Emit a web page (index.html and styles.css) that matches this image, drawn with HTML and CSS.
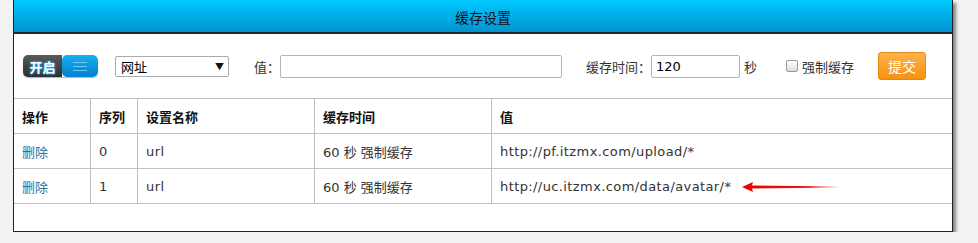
FILE: index.html
```html
<!DOCTYPE html>
<html lang="zh-CN">
<head>
    <meta charset="UTF-8">
    <title>缓存设置</title>
    <link rel="stylesheet" href="styles.css">
</head>
<body>

<div class="page">
    <div class="panel">
        <div class="panel-head">缓存设置</div>

        <form class="toolbar">
            <div class="switch">
                <span class="switch-on">开启</span>
                <span class="switch-knob"><i></i><i></i><i></i></span>
            </div>

            <div class="select">
                <span>网址</span>
                <span class="caret">▼</span>
            </div>

            <label class="lbl lbl-value">值：</label>
            <input type="text" class="txt txt-value">

            <label class="lbl lbl-time">缓存时间：</label>
            <input type="text" class="txt txt-time" value="120">
            <span class="unit">秒</span>

            <label class="chk"><span class="box"></span>强制缓存</label>

            <button type="button" class="btn-submit">提交</button>
        </form>

        <table class="list">
            <tr>
                <th class="c-op">操作</th>
                <th class="c-idx">序列</th>
                <th class="c-name">设置名称</th>
                <th class="c-time">缓存时间</th>
                <th>值</th>
            </tr>
            <tr>
                <td><a href="#">删除</a></td>
                <td>0</td>
                <td class="latin">url</td>
                <td>60 秒 强制缓存</td>
                <td class="latin">http://pf.itzmx.com/upload/*</td>
            </tr>
            <tr>
                <td><a href="#">删除</a></td>
                <td>1</td>
                <td class="latin">url</td>
                <td>60 秒 强制缓存</td>
                <td class="latin">http://uc.itzmx.com/data/avatar/*
                    <svg class="arrow" width="96" height="12" viewBox="0 0 96 12">
                        <defs>
                            <linearGradient id="fade" x1="0" x2="1" y1="0" y2="0">
                                <stop offset="0" stop-color="#ee0000"/>
                                <stop offset="0.7" stop-color="#f01010"/>
                                <stop offset="1" stop-color="#f01010" stop-opacity="0.15"/>
                            </linearGradient>
                        </defs>
                        <polygon points="0,6 11,1 10,4.5 96,5.6 96,6.4 10,7.6 11,11" fill="url(#fade)"/>
                    </svg>
                </td>
            </tr>
        </table>
    </div>
</div>

</body>
</html>
```

FILE: styles.css
```css
body {
    margin: 0;
    background-color: #f2f2f2;
    font-family: "DejaVu Sans", "Noto Sans CJK SC", sans-serif;
    font-size: 13px;
    color: #333;
}
.page {
    padding: 0 25px 0 13px;
}
.panel {
    background-color: #fff;
    border: 1px solid #222;
    border-top: none;
    box-shadow: 3px 3px 3px rgba(0, 0, 0, 0.45);
    height: 231px;
}
.panel-head {
    height: 32px;
    line-height: 34px;
    text-align: center;
    font-family: "Noto Sans CJK SC", sans-serif;
    font-size: 14px;
    color: #111;
    background: linear-gradient(#00c8ff, #0094cf);
    border-bottom: 2px solid #1e2a30;
}

/* toolbar */
.toolbar {
    display: flex;
    align-items: center;
    height: 64px;
    padding-left: 9px;
    margin: 0;
}
.switch {
    display: flex;
    width: 75px;
    height: 22px;
    border-radius: 5px;
    overflow: hidden;
    box-shadow: 0 1px 1px rgba(0, 0, 0, 0.3);
}
.switch-on {
    width: 39px;
    display: flex;
    align-items: center;
    justify-content: center;
    background: linear-gradient(#5a5a5a, #2c2c2c);
    color: #fff;
    font-family: "Noto Sans CJK SC", sans-serif;
    font-weight: bold;
    font-size: 13px;
    text-shadow: 0 0 3px #2ab0ff, 0 0 2px #2ab0ff;
}
.switch-knob {
    flex: 1;
    display: flex;
    flex-direction: column;
    align-items: center;
    justify-content: center;
    gap: 3px;
    background: linear-gradient(#1aaef0, #0080cc);
    border-radius: 5px;
}
.switch-knob i {
    display: block;
    width: 14px;
    height: 1px;
    background-color: #6cc8f4;
}
.select {
    display: flex;
    align-items: center;
    justify-content: space-between;
    box-sizing: border-box;
    width: 114px;
    height: 21px;
    margin-left: 17px;
    padding: 0 4px 0 5px;
    border: 1px solid #aaa;
    border-radius: 2px;
    color: #000;
    font-family: "Noto Sans CJK SC", sans-serif;
}
.select .caret {
    font-size: 9px;
    color: #111;
}
.lbl {
    font-family: "Noto Sans CJK SC", sans-serif;
    color: #333;
}
.lbl-value {
    margin-left: 25px;
}
.lbl-time {
    margin-left: 24px;
}
.txt {
    box-sizing: border-box;
    height: 23px;
    border: 1px solid #b5b5b5;
    border-radius: 2px;
    padding: 0 4px;
    font-family: "DejaVu Sans", sans-serif;
    font-size: 13px;
    color: #000;
}
.txt-value {
    width: 282px;
}
.txt-time {
    width: 89px;
}
.unit {
    margin-left: 4px;
    font-family: "Noto Sans CJK SC", sans-serif;
}
.chk {
    display: flex;
    align-items: center;
    margin-left: 29px;
    font-family: "Noto Sans CJK SC", sans-serif;
    color: #333;
}
.chk .box {
    width: 10px;
    height: 10px;
    margin-right: 4px;
    border: 1px solid #999;
    border-radius: 2px;
    background: linear-gradient(#fff, #ddd);
}
.btn-submit {
    width: 48px;
    height: 28px;
    margin-left: 24px;
    border: 1px solid #e08a12;
    border-radius: 3px;
    background: linear-gradient(#fdb24a, #f7920f);
    color: #fff;
    font-family: "Noto Sans CJK SC", sans-serif;
    font-size: 14px;
    padding: 0;
}

/* list */
.list {
    width: 100%;
    border-collapse: collapse;
}
.list th,
.list td {
    height: 34px;
    padding: 0 8px;
    border: 1px solid #c0c0c0;
    text-align: left;
    white-space: nowrap;
}
.list tr > :first-child {
    border-left: none;
}
.list tr > :last-child {
    border-right: none;
}
.list th {
    font-family: "Noto Sans CJK SC", sans-serif;
    font-weight: bold;
    color: #111;
}
.list td.latin {
    letter-spacing: 0.4px;
}
.c-op { width: 60px; }
.c-idx { width: 30px; }
.c-name { width: 160px; }
.c-time { width: 160px; }
.list a {
    color: #2f6f9f;
    text-decoration: none;
    font-family: "Noto Sans CJK SC", sans-serif;
}
.arrow {
    vertical-align: middle;
    margin-left: 6px;
}
```
